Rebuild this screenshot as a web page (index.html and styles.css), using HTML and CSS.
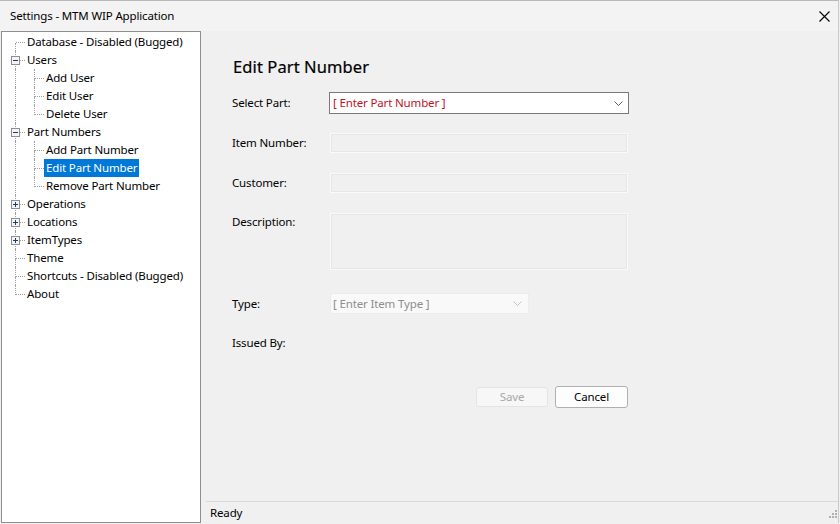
FILE: index.html
```html
<!DOCTYPE html>
<html>
<head>
<meta charset="utf-8">
<link rel="stylesheet" href="styles.css">
</head>
<body>
<div class="window">
  <header class="titlebar">
    <span class="title">Settings - MTM WIP Application</span>
    <span class="close"><svg width="11" height="11" viewBox="0 0 11 11"><path d="M0.5 0.5 L10.5 10.5 M10.5 0.5 L0.5 10.5" stroke="#000" stroke-width="1.1" fill="none"/></svg></span>
  </header>
  <div class="main">
    <nav class="tree">
      <div class="node first"><span class="conn"><i class="tl"></i><i class="tr"></i><i class="bl"></i><i></i></span><span class="label">Database - Disabled (Bugged)</span></div>
      <div class="node"><span class="conn"><i class="tl"></i><i class="tr"></i><i class="bl"></i><i></i><svg class="exp" width="9" height="9" viewBox="0 0 9 9"><rect x="0.5" y="0.5" width="8" height="8" fill="#f4f4f4" stroke="#8e8f8f"/><path d="M2 4.5 H7" stroke="#1d3c70"/></svg></span><span class="label">Users</span></div>
      <div class="node"><span class="pass"></span><span class="conn"><i class="tl"></i><i class="tr"></i><i class="bl"></i><i></i></span><span class="label">Add User</span></div>
      <div class="node"><span class="pass"></span><span class="conn"><i class="tl"></i><i class="tr"></i><i class="bl"></i><i></i></span><span class="label">Edit User</span></div>
      <div class="node last"><span class="pass"></span><span class="conn"><i class="tl"></i><i class="tr"></i><i class="bl"></i><i></i></span><span class="label">Delete User</span></div>
      <div class="node"><span class="conn"><i class="tl"></i><i class="tr"></i><i class="bl"></i><i></i><svg class="exp" width="9" height="9" viewBox="0 0 9 9"><rect x="0.5" y="0.5" width="8" height="8" fill="#f4f4f4" stroke="#8e8f8f"/><path d="M2 4.5 H7" stroke="#1d3c70"/></svg></span><span class="label">Part Numbers</span></div>
      <div class="node"><span class="pass"></span><span class="conn"><i class="tl"></i><i class="tr"></i><i class="bl"></i><i></i></span><span class="label">Add Part Number</span></div>
      <div class="node"><span class="pass"></span><span class="conn"><i class="tl"></i><i class="tr"></i><i class="bl"></i><i></i></span><span class="label selected">Edit Part Number</span></div>
      <div class="node last"><span class="pass"></span><span class="conn"><i class="tl"></i><i class="tr"></i><i class="bl"></i><i></i></span><span class="label">Remove Part Number</span></div>
      <div class="node"><span class="conn"><i class="tl"></i><i class="tr"></i><i class="bl"></i><i></i><svg class="exp" width="9" height="9" viewBox="0 0 9 9"><rect x="0.5" y="0.5" width="8" height="8" fill="#f4f4f4" stroke="#8e8f8f"/><path d="M2 4.5 H7 M4.5 2 V7" stroke="#1d3c70"/></svg></span><span class="label">Operations</span></div>
      <div class="node"><span class="conn"><i class="tl"></i><i class="tr"></i><i class="bl"></i><i></i><svg class="exp" width="9" height="9" viewBox="0 0 9 9"><rect x="0.5" y="0.5" width="8" height="8" fill="#f4f4f4" stroke="#8e8f8f"/><path d="M2 4.5 H7 M4.5 2 V7" stroke="#1d3c70"/></svg></span><span class="label">Locations</span></div>
      <div class="node"><span class="conn"><i class="tl"></i><i class="tr"></i><i class="bl"></i><i></i><svg class="exp" width="9" height="9" viewBox="0 0 9 9"><rect x="0.5" y="0.5" width="8" height="8" fill="#f4f4f4" stroke="#8e8f8f"/><path d="M2 4.5 H7 M4.5 2 V7" stroke="#1d3c70"/></svg></span><span class="label">ItemTypes</span></div>
      <div class="node"><span class="conn"><i class="tl"></i><i class="tr"></i><i class="bl"></i><i></i></span><span class="label">Theme</span></div>
      <div class="node"><span class="conn"><i class="tl"></i><i class="tr"></i><i class="bl"></i><i></i></span><span class="label">Shortcuts - Disabled (Bugged)</span></div>
      <div class="node last"><span class="conn"><i class="tl"></i><i class="tr"></i><i class="bl"></i><i></i></span><span class="label">About</span></div>
    </nav>
    <section class="content">
      <div class="form">
        <h1 class="heading">Edit Part Number</h1>
        <div class="row r-select">
          <span class="lbl">Select Part:</span>
          <div class="combo combo-active"><span class="combo-text">[ Enter Part Number ]</span><svg class="chev" width="9" height="5" viewBox="0 0 9 5"><path d="M0.5 0.5 L4.5 4.5 L8.5 0.5" stroke="#606060" fill="none"/></svg></div>
        </div>
        <div class="row r-item">
          <span class="lbl">Item Number:</span>
          <div class="field"></div>
        </div>
        <div class="row r-cust">
          <span class="lbl">Customer:</span>
          <div class="field"></div>
        </div>
        <div class="row r-desc">
          <span class="lbl">Description:</span>
          <div class="field field-tall"></div>
        </div>
        <div class="row r-type">
          <span class="lbl">Type:</span>
          <div class="combo combo-disabled"><span class="combo-text">[ Enter Item Type ]</span><svg class="chev" width="9" height="5" viewBox="0 0 9 5"><path d="M0.5 0.5 L4.5 4.5 L8.5 0.5" stroke="#c4c4c4" fill="none"/></svg></div>
        </div>
        <div class="row r-issued">
          <span class="lbl">Issued By:</span>
        </div>
        <div class="buttons">
          <button class="btn btn-disabled">Save</button>
          <button class="btn btn-default">Cancel</button>
        </div>
      </div>
      <footer class="status">
        <span class="status-text">Ready</span>
        <svg class="grip" width="10" height="10" viewBox="0 0 10 10"><g fill="#b0b0b0"><rect x="8" y="0" width="2" height="2"/><rect x="5" y="3" width="2" height="2"/><rect x="8" y="3" width="2" height="2"/><rect x="2" y="6" width="2" height="2"/><rect x="5" y="6" width="2" height="2"/><rect x="8" y="6" width="2" height="2"/></g></svg>
      </footer>
    </section>
  </div>
</div>
</body>
</html>
```

FILE: styles.css
```css
html, body {
  margin: 0;
  padding: 0;
  background: #f0f0f0;
}
body {
  font-family: "Segoe UI", "Noto Sans", sans-serif;
  font-size: 11.5px;
  letter-spacing: -0.15px;
  color: #000;
}
.window {
  width: 839px;
  height: 523px;
  box-sizing: border-box;
  border-top: 1px solid #b9b9b9;
  border-right: 1px solid #c9c9c9;
  display: flex;
  flex-direction: column;
  background: #f0f0f0;
}
.titlebar {
  height: 30px;
  flex: none;
  background: #f3f3f3;
  display: flex;
  align-items: center;
  justify-content: space-between;
  padding-left: 10px;
  padding-right: 8px;
}
.title {
  font-size: 11.5px;
  line-height: 16px;
}
.close {
  display: flex;
  width: 11px;
  height: 11px;
}
.main {
  flex: 1;
  display: flex;
  min-height: 0;
}
.tree {
  width: 200px;
  box-sizing: border-box;
  margin-left: 1px;
  border: 1px solid #8f8f8f;
  background: #fff;
  padding-top: 1px;
  display: flex;
  flex-direction: column;
}
.node {
  display: flex;
  height: 18px;
  align-items: stretch;
}
.pass {
  width: 19px;
  flex: none;
}
.pass::before {
  content: "";
  display: block;
  width: 14px;
  height: 18px;
  box-sizing: border-box;
  border-right: 1px dotted #a0a0a0;
}
.conn {
  position: relative;
  flex: none;
  width: 23px;
  display: grid;
  grid-template-columns: 14px 9px;
  grid-template-rows: 10px 8px;
}
.conn i {
  display: block;
  box-sizing: border-box;
}
.conn .tl { border-right: 1px dotted #a0a0a0; }
.conn .tr { border-bottom: 1px dotted #a0a0a0; }
.conn .bl { border-right: 1px dotted #a0a0a0; }
.node.first > .conn .tl { border-right: 0; }
.node.last > .conn .bl { border-right: 0; }
.exp {
  position: absolute;
  left: 9px;
  top: 5px;
  display: block;
}
.label {
  padding: 0 2px;
  line-height: 18px;
  white-space: nowrap;
}
.label.selected {
  background: #0078d7;
  color: #fff;
}
.content {
  flex: 1;
  display: flex;
  flex-direction: column;
  min-width: 0;
}
.form {
  flex: 1;
  padding-left: 31px;
  padding-top: 26px;
  display: flex;
  flex-direction: column;
}
.heading {
  margin: 0 0 0 1px;
  font-size: 16.5px;
  letter-spacing: 0.1px;
  font-weight: normal;
  line-height: 20px;
  -webkit-text-stroke: 0.2px #000;
}
.row {
  display: flex;
  align-items: center;
}
.lbl {
  width: 97px;
  flex: none;
  line-height: 16px;
}
.r-select { margin-top: 15px; height: 22px; }
.r-item { margin-top: 19px; height: 20px; }
.r-cust { margin-top: 20px; height: 20px; }
.r-desc { margin-top: 20px; height: 57px; align-items: flex-start; }
.r-desc .lbl { margin-top: 1px; }
.r-type { margin-top: 23px; height: 21px; }
.r-issued { margin-top: 19px; height: 20px; }
.combo {
  box-sizing: border-box;
  display: flex;
  align-items: center;
  justify-content: space-between;
  padding-left: 3px;
  padding-right: 5px;
}
.combo-active {
  width: 300px;
  height: 22px;
  background: #fff;
  border: 1px solid #7a7a7a;
  color: #c50f1f;
}
.combo-disabled {
  width: 199px;
  height: 21px;
  margin-left: 1px;
  background: #f9f9f9;
  border: 1px solid #ececec;
  padding-left: 2px;
  padding-right: 6px;
  color: #8d8d8d;
}
.combo-text {
  line-height: 16px;
}
.chev {
  display: block;
}
.field {
  box-sizing: border-box;
  width: 298px;
  height: 20px;
  margin-left: 1px;
  background: #f0f0f0;
  border: 1px solid #fafafa;
  outline: 1px solid #e6e6e6;
  outline-offset: -2px;
}
.field-tall {
  height: 57px;
}
.buttons {
  margin-top: 33px;
  width: 397px;
  display: flex;
  justify-content: flex-end;
  align-items: center;
  gap: 7px;
}
.btn {
  font-family: inherit;
  font-size: 11.5px;
  letter-spacing: -0.15px;
  margin: 0;
  padding: 0;
  line-height: 16px;
  border-radius: 3px;
  box-sizing: border-box;
}
.btn-disabled {
  width: 72px;
  height: 20px;
  background: #f7f7f7;
  border: 1px solid #e4e4e4;
  color: #a8a8a8;
}
.btn-default {
  width: 73px;
  height: 22px;
  margin-right: 1px;
  background: #fdfdfd;
  border: 1px solid #b0b0b0;
  color: #000;
}
.status {
  height: 22px;
  flex: none;
  box-sizing: border-box;
  margin-left: 5px;
  border-top: 1px solid #d9d9d9;
  display: flex;
  align-items: center;
  justify-content: space-between;
  padding-left: 4px;
  padding-right: 1px;
}
.status-text {
  line-height: 16px;
}
.grip {
  display: block;
  align-self: flex-end;
  margin-bottom: 3px;
}
```
